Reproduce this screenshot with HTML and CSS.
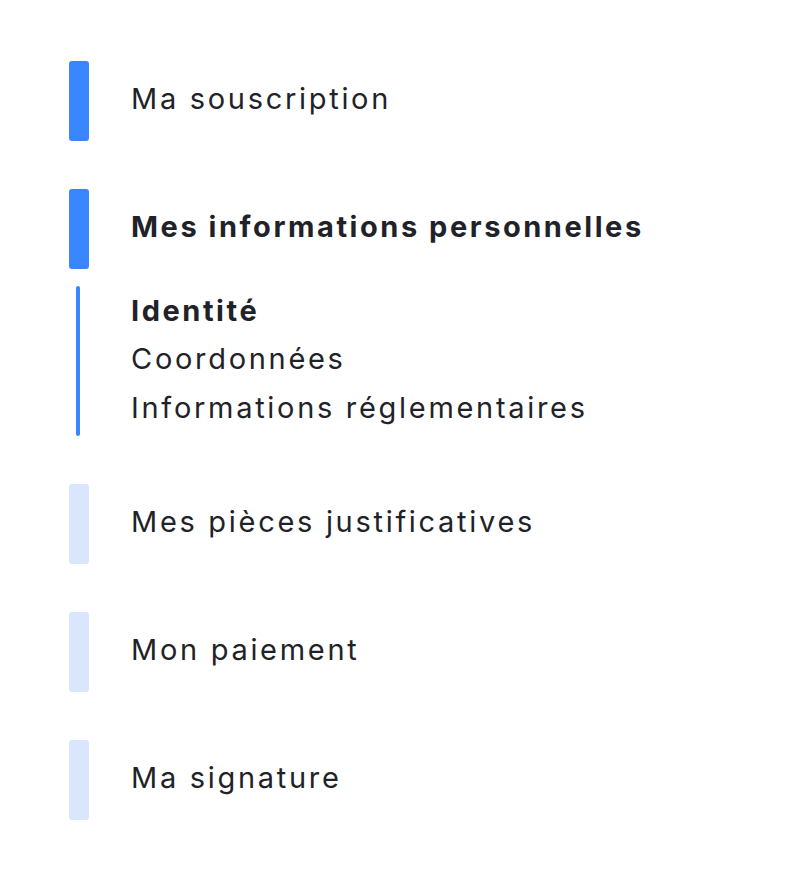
FILE: index.html
```html
<!DOCTYPE html>
<html lang="fr">
<head>
<meta charset="utf-8">
<link rel="stylesheet" href="styles.css">
</head>
<body>
<nav class="steps">
  <div class="step done"><span class="bar"></span><span class="label">Ma souscription</span></div>
  <div class="group">
    <div class="step active"><span class="bar"></span><span class="label strong">Mes informations personnelles</span></div>
    <div class="sub">
      <span class="line"></span>
      <ul class="sublist">
        <li class="strong">Identité</li>
        <li>Coordonnées</li>
        <li>Informations réglementaires</li>
      </ul>
    </div>
  </div>
  <div class="step todo"><span class="bar"></span><span class="label">Mes pièces justificatives</span></div>
  <div class="step todo"><span class="bar"></span><span class="label">Mon paiement</span></div>
  <div class="step todo"><span class="bar"></span><span class="label">Ma signature</span></div>
</nav>
</body>
</html>
```
FILE: styles.css
```css
html, body {
  margin: 0;
  padding: 0;
  background: #ffffff;
}
body {
  font-family: Inter, "Noto Sans", sans-serif;
  color: #1f2329;
}
.steps {
  display: flex;
  flex-direction: column;
  gap: 48px;
  padding: 61px 0 0 69px;
}
.group {
  display: flex;
  flex-direction: column;
  gap: 17px;
}
.step {
  display: flex;
  align-items: center;
  gap: 42px;
  height: 80px;
}
.bar {
  width: 20px;
  height: 80px;
  border-radius: 3px;
  flex: none;
}
.done .bar, .active .bar {
  background: #3a86ff;
}
.todo .bar {
  background: #d9e6fd;
}
.label {
  font-size: 29px;
  line-height: 1;
  letter-spacing: 2.7px;
  margin-bottom: 5px;
}
.strong {
  font-weight: 700;
  letter-spacing: 2.55px;
}
.sub {
  display: flex;
  height: 150px;
}
.line {
  width: 4px;
  height: 150px;
  margin-left: 7px;
  border-radius: 2px;
  background: #3a86ff;
  flex: none;
}
.sublist {
  list-style: none;
  margin: 0;
  padding: 0 0 3px 51px;
  font-size: 29px;
  letter-spacing: 2.7px;
  line-height: 48.5px;
  display: flex;
  flex-direction: column;
  justify-content: center;
}
```
